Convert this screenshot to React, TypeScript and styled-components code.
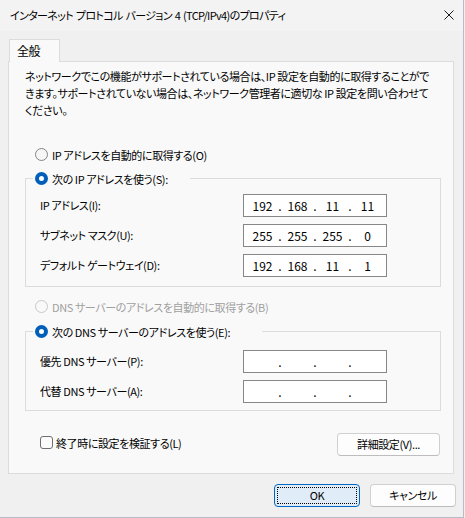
import React from "react";
import styled, { createGlobalStyle } from "styled-components";

const Global = createGlobalStyle`
  html, body { margin: 0; padding: 0; background: #f0f0f0; }
  body {
    font-family: "Noto Sans CJK JP", "Noto Sans", sans-serif;
    font-size: 11px;
    letter-spacing: -0.4px;
    color: #000;
    font-feature-settings: "palt";
  }
  * { box-sizing: border-box; }
`;

const Window = styled.div`
  width: 464px;
  height: 518px;
  background: #f0f0f0;
  border-right: 1px solid #b8bdc5;
  border-bottom: 1px solid #b8bdc5;
  display: flex;
  flex-direction: column;
`;

const TitleBar = styled.div`
  height: 31px;
  flex: none;
  display: flex;
  align-items: center;
  justify-content: space-between;
  padding: 0 9px 0 10px;
  background: #f3f3f3;
`;

const TitleText = styled.span`
  line-height: 17px;
  letter-spacing: -0.65px;
  word-spacing: 1px;
  white-space: nowrap;
`;

const CloseIcon = styled.svg`
  width: 10px;
  height: 10px;
  margin-top: -1px;
`;

const Body = styled.div`
  padding: 8px 9px 0 8px;
  display: flex;
  flex-direction: column;
`;

const TabStrip = styled.div`
  display: flex;
  padding-left: 1px;
  position: relative;
  z-index: 1;
`;

const Tab = styled.div`
  width: 51px;
  height: 23px;
  border: 1px solid #dcdcdc;
  border-bottom: none;
  background: #f9f9f9;
  padding: 2px 0 0 7px;
  line-height: 17px;
  font-size: 12px;
  margin-bottom: -1px;
`;

const Panel = styled.div`
  height: 413px;
  border: 1px solid #dcdcdc;
  background: #f9f9f9;
  padding: 6px 13px 0 16px;
  display: flex;
  flex-direction: column;
`;

const Description = styled.p`
  margin: 0;
  line-height: 17px;
  white-space: nowrap;
`;

const RadioRow = styled.label<{ $disabled?: boolean; $indent?: number }>`
  display: flex;
  align-items: center;
  height: 17px;
  padding-left: ${(p) => p.$indent ?? 10}px;
  gap: 4px;
  color: ${(p) => (p.$disabled ? "#a0a0a0" : "#000")};
  white-space: nowrap;
`;

const RadioCircle = styled.span<{ $state: "on" | "off" | "disabled" }>`
  width: 13px;
  height: 13px;
  border-radius: 50%;
  flex: none;
  ${(p) =>
    p.$state === "on"
      ? "background:#ffffff; border:4px solid #005fb8;"
      : p.$state === "off"
      ? "background:#f6f6f6; border:1px solid #858585;"
      : "background:#f9f9f9; border:1px solid #c8c8c8;"}
`;

const Group = styled.fieldset<{ $top: number }>`
  margin: ${(p) => p.$top}px 0 0 0;
  width: 416px;
  border: 1px solid #dcdcdc;
  padding: 0;
  min-width: 0;
`;

const Legend = styled.legend<{ $width: number }>`
  margin-left: 7px;
  padding: 0;
  width: ${(p) => p.$width}px;
`;

const Rows = styled.div<{ $pt: number; $pb: number }>`
  display: flex;
  flex-direction: column;
  gap: 7px;
  padding: ${(p) => p.$pt}px 0 ${(p) => p.$pb}px 14px;
`;

const FieldRow = styled.div`
  display: grid;
  grid-template-columns: 203px 144px;
  align-items: center;
  height: 23px;
`;

const FieldLabel = styled.span`
  white-space: nowrap;
  line-height: 17px;
`;

const IpBox = styled.div`
  width: 144px;
  height: 23px;
  border: 1px solid #878787;
  background: #ffffff;
  display: flex;
  align-items: center;
  padding: 0 0 0 3px;
  font-size: 12px;
  letter-spacing: 0;
`;

const Octet = styled.span`
  width: 31px;
  text-align: center;
  line-height: 17px;
`;

const Dot = styled.span`
  width: 4px;
  text-align: center;
  line-height: 17px;
`;

const BottomRow = styled.div`
  display: flex;
  justify-content: space-between;
  align-items: flex-start;
  margin-top: 22px;
  width: 415px;
`;

const CheckRow = styled.label`
  display: flex;
  align-items: center;
  gap: 3px;
  margin: 1px 0 0 15px;
  height: 17px;
  white-space: nowrap;
`;

const CheckBox = styled.span`
  width: 13px;
  height: 13px;
  border: 1px solid #6f6f6f;
  border-radius: 3px;
  background: #fbfbfb;
  flex: none;
`;

const Button = styled.button<{ $primary?: boolean; $w: number }>`
  width: ${(p) => p.$w}px;
  height: 23px;
  font-family: inherit;
  font-size: 11px;
  letter-spacing: -0.4px;
  font-feature-settings: "palt";
  color: #000;
  line-height: 17px;
  padding: 0;
  border-radius: 4px;
  border: 1px solid ${(p) => (p.$primary ? "#0067c0" : "#d0d0d0")};
  border-bottom-color: ${(p) => (p.$primary ? "#0067c0" : "#bdbdbd")};
  background: ${(p) => (p.$primary ? "#e0ecf8" : "#fdfdfd")};
  ${(p) => (p.$primary ? "outline: 1px dotted #000; outline-offset: -4px;" : "")}
`;

const Footer = styled.div`
  display: flex;
  justify-content: flex-end;
  gap: 10px;
  padding: 10px 7px 0 0;
`;

function IpField({ octets }: { octets: string[] }) {
  return (
    <IpBox>
      {octets.map((o, i) => (
        <React.Fragment key={i}>
          {i > 0 && <Dot>.</Dot>}
          <Octet>{o}</Octet>
        </React.Fragment>
      ))}
    </IpBox>
  );
}

export default function App() {
  return (
    <>
      <Global />
      <Window>
        <TitleBar>
          <TitleText>インターネット プロトコル バージョン 4 (TCP/IPv4)のプロパティ</TitleText>
          <CloseIcon viewBox="0 0 10 10">
            <path d="M0.5 0.5 L9.5 9.5 M9.5 0.5 L0.5 9.5" stroke="#1b1b1b" strokeWidth="1" fill="none" />
          </CloseIcon>
        </TitleBar>
        <Body>
          <TabStrip>
            <Tab>全般</Tab>
          </TabStrip>
          <Panel>
            <Description>
              ネットワークでこの機能がサポートされている場合は、IP 設定を自動的に取得することがで
              <br />
              きます。サポートされていない場合は、ネットワーク管理者に適切な IP 設定を問い合わせて
              <br />
              ください。
            </Description>
            <RadioRow style={{ marginTop: 27 }}>
              <RadioCircle $state="off" />
              IP アドレスを自動的に取得する(O)
            </RadioRow>
            <Group $top={7}>
              <Legend $width={157}>
                <RadioRow $indent={2}>
                  <RadioCircle $state="on" />
                  次の IP アドレスを使う(S):
                </RadioRow>
              </Legend>
              <Rows $pt={7} $pb={9}>
                <FieldRow>
                  <FieldLabel>IP アドレス(I):</FieldLabel>
                  <IpField octets={["192", "168", "11", "11"]} />
                </FieldRow>
                <FieldRow>
                  <FieldLabel>サブネット マスク(U):</FieldLabel>
                  <IpField octets={["255", "255", "255", "0"]} />
                </FieldRow>
                <FieldRow>
                  <FieldLabel>デフォルト ゲートウェイ(D):</FieldLabel>
                  <IpField octets={["192", "168", "11", "1"]} />
                </FieldRow>
              </Rows>
            </Group>
            <RadioRow $disabled style={{ marginTop: 11 }}>
              <RadioCircle $state="disabled" />
              DNS サーバーのアドレスを自動的に取得する(B)
            </RadioRow>
            <Group $top={8}>
              <Legend $width={229}>
                <RadioRow $indent={2}>
                  <RadioCircle $state="on" />
                  次の DNS サーバーのアドレスを使う(E):
                </RadioRow>
              </Legend>
              <Rows $pt={10} $pb={7}>
                <FieldRow>
                  <FieldLabel>優先 DNS サーバー(P):</FieldLabel>
                  <IpField octets={["", "", "", ""]} />
                </FieldRow>
                <FieldRow>
                  <FieldLabel>代替 DNS サーバー(A):</FieldLabel>
                  <IpField octets={["", "", "", ""]} />
                </FieldRow>
              </Rows>
            </Group>
            <BottomRow>
              <CheckRow>
                <CheckBox />
                終了時に設定を検証する(L)
              </CheckRow>
              <Button $w={103}>詳細設定(V)...</Button>
            </BottomRow>
          </Panel>
        </Body>
        <Footer>
          <Button $primary $w={86}>OK</Button>
          <Button $w={86}>キャンセル</Button>
        </Footer>
      </Window>
    </>
  );
}
